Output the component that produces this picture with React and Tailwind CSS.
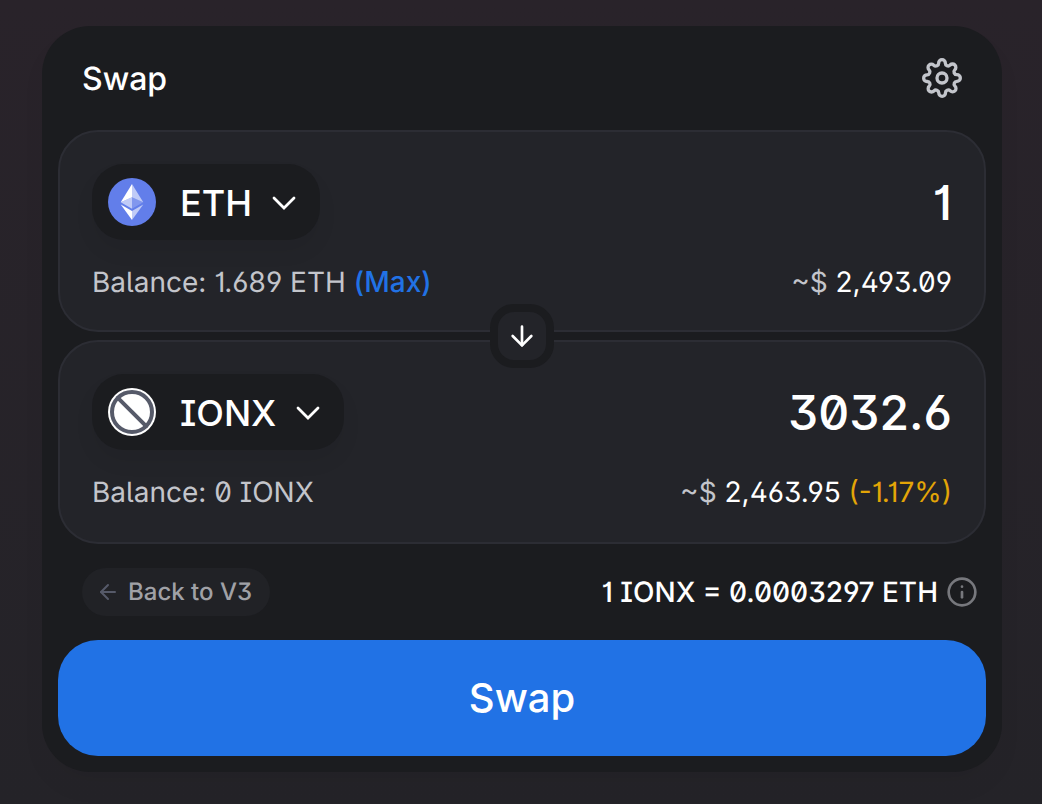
import { useState } from "react";
import { FiArrowDown, FiArrowLeft, FiInfo, FiSettings, FiSlash } from "react-icons/fi";

/* === Icons === */
function EthLogo() {
  return (
    <svg viewBox="0 0 32 32" className="size-12 shrink-0" aria-hidden="true">
      <circle cx="16" cy="16" r="16" fill="#627eea" />
      <g fill="#fff">
        <path fillOpacity=".6" d="M16 4v8.87l7.5 3.35z" />
        <path d="M16 4L8.5 16.22l7.5-3.35z" />
        <path fillOpacity=".6" d="M16 21.97v6.03L23.5 17.62z" />
        <path d="M16 28v-6.03L8.5 17.62z" />
        <path fillOpacity=".2" d="M16 20.57l7.5-4.35-7.5-3.35z" />
        <path fillOpacity=".6" d="M8.5 16.22l7.5 4.35v-7.7z" />
      </g>
    </svg>
  );
}

function UnknownLogo() {
  return (
    <span className="size-12 shrink-0 rounded-full bg-white">
      <FiSlash className="size-12 text-[#565a69]" aria-hidden="true" />
    </span>
  );
}

function Chevron() {
  return (
    <svg
      viewBox="0 0 12 7"
      className="h-[14px] w-6"
      fill="none"
      stroke="#fff"
      strokeWidth="1.4"
      strokeLinecap="round"
      aria-hidden="true"
    >
      <path d="M1 1L6 6L11 1" />
    </svg>
  );
}

/* === Token panel === */
function TokenPanel({ label, logo, symbol, amount, onAmount, balance, onMax, fiat, impact, className }) {
  return (
    <section className={`rounded-[40px] border-2 border-[#2c2d34] bg-[#232429] px-8 pt-8 ${className}`}>
      <div className="flex items-center justify-between">
        <button
          type="button"
          className="flex h-[76px] shrink-0 items-center gap-6 rounded-[32px] bg-[#1b1c1f] pl-4 pr-6 shadow-[0_12px_20px_rgba(0,0,0,0.06)]"
        >
          {logo}
          <span className="flex items-center gap-5 pt-0.5 text-4xl font-medium">
            {symbol}
            <Chevron />
          </span>
        </button>
        <input
          aria-label={label}
          inputMode="decimal"
          value={amount}
          onChange={(e) => onAmount(e.target.value)}
          className="min-w-0 flex-1 bg-transparent text-right text-5xl font-medium outline-none"
        />
      </div>
      <div className="mt-[26px] flex justify-between text-[28px] leading-8">
        <p className="text-[#c3c5cb]">
          Balance: {balance}
          {onMax && (
            <button type="button" onClick={onMax} className="ml-2 font-medium text-[#2172e5]">
              (Max)
            </button>
          )}
        </p>
        <p>
          <span className="text-[#c3c5cb]">~$ </span>
          {fiat}
          {impact && <span className="text-[#e3a507]"> ({impact})</span>}
        </p>
      </div>
    </section>
  );
}

/* === PAGE === */
export default function App() {
  const [pay, setPay] = useState("1");
  const [receive, setReceive] = useState("3032.6");

  return (
    <div className="min-h-screen bg-linear-to-b from-[#29232a] to-[#242328] pt-[26px] pr-10 pb-8 pl-[42px] font-[Inter,sans-serif] text-white [font-feature-settings:'ss01','ss02','cv01','cv03'] [text-rendering:geometricPrecision]">
      <main className="rounded-[48px] bg-[#1b1c1f] px-4 pb-4 shadow-[0_16px_24px_rgba(0,0,0,0.04)]">
        <header className="flex h-[104px] items-center justify-between px-6">
          <h1 className="pt-0.5 text-[32px] font-medium">Swap</h1>
          <button type="button" aria-label="Settings">
            <FiSettings className="size-10 text-[#c3c5cb]" />
          </button>
        </header>

        <div className="flex flex-col">
          <TokenPanel
            label="Amount to pay"
            logo={<EthLogo />}
            symbol="ETH"
            amount={pay}
            onAmount={setPay}
            balance="1.689 ETH"
            onMax={() => setPay("1.689")}
            fiat="2,493.09"
            className="pb-8"
          />
          <button
            type="button"
            aria-label="Switch tokens"
            className="z-10 -my-7 flex size-16 items-center justify-center self-center rounded-3xl border-8 border-[#1b1c1f] bg-[#232429]"
          >
            <FiArrowDown className="size-8" />
          </button>
          <TokenPanel
            label="Amount to receive"
            logo={<UnknownLogo />}
            symbol="IONX"
            amount={receive}
            onAmount={setReceive}
            balance="0 IONX"
            fiat="2,463.95"
            impact="-1.17%"
            className="pb-[34px]"
          />
        </div>

        <div className="my-6 flex items-center justify-between pl-6 pr-2">
          <a href="#v3" className="flex h-12 items-center gap-2 rounded-3xl bg-[#212226] pr-[18px] pl-[14px] text-2xl font-medium text-[#a0a1a6]">
            <FiArrowLeft className="size-6 text-[#565a69]" />
            Back to V3
          </a>
          <p className="flex items-center gap-2 text-[28px] font-medium">
            1 IONX = 0.0003297 ETH
            <FiInfo className="size-8 text-[#77787d]" />
          </p>
        </div>

        <button type="button" className="h-[116px] w-full rounded-[40px] bg-[#2172e5] text-[40px] font-medium">
          Swap
        </button>
      </main>
    </div>
  );
}
